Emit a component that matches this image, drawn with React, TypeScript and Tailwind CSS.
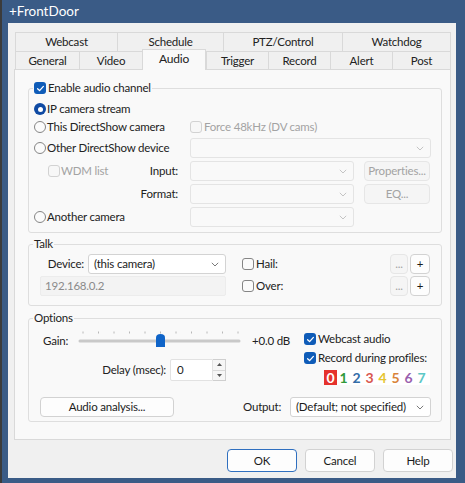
import React from "react";

const F = "font-['Lato','Liberation_Sans',sans-serif]";

function Check({ checked = false, disabled = false }: { checked?: boolean; disabled?: boolean }) {
  if (checked)
    return (
      <span className="inline-flex w-[12px] h-[12px] rounded-[3px] bg-[#0f5cb8] items-center justify-center shrink-0">
        <svg width="9" height="9" viewBox="0 0 9 9">
          <path d="M1.6 4.7 L3.6 6.6 L7.4 2.4" fill="none" stroke="white" strokeWidth="1.3" strokeLinecap="round" strokeLinejoin="round" />
        </svg>
      </span>
    );
  return (
    <span
      className={`inline-block w-[12px] h-[12px] rounded-[3px] border shrink-0 ${
        disabled ? "border-[#d2d2d2] bg-[#f7f7f7]" : "border-[#858585] bg-[#fbfbfb]"
      }`}
    />
  );
}

function Radio({ checked = false }: { checked?: boolean }) {
  if (checked)
    return (
      <span className="inline-flex w-[12px] h-[12px] rounded-full bg-[#0f4aa3] items-center justify-center shrink-0">
        <span className="w-[5px] h-[5px] rounded-full bg-white" />
      </span>
    );
  return <span className="inline-block w-[12px] h-[12px] rounded-full border border-[#858585] bg-[#fbfbfb] shrink-0" />;
}

function Chevron({ light = false }: { light?: boolean }) {
  return (
    <svg width="8" height="5" viewBox="0 0 8 5" className="shrink-0">
      <path d="M0.8 0.8 L4 4 L7.2 0.8" fill="none" stroke={light ? "#c4c4c4" : "#7a7a7a"} strokeWidth="1" />
    </svg>
  );
}

function Select({ w, value = "", disabled = false }: { w: string; value?: string; disabled?: boolean }) {
  return (
    <div
      className={`${w} h-[20px] rounded-[3px] border flex items-center justify-between pl-[5px] pr-[6px] shrink-0 ${
        disabled ? "border-[#e4e4e4] bg-[#f9f9f9]" : "border-[#d3d3d3] bg-white"
      }`}
    >
      <span className="text-[#1b1b1b] leading-none whitespace-nowrap">{value}</span>
      <Chevron light={disabled} />
    </div>
  );
}

function Btn({ w, label, disabled = false, def = false }: { w: string; label: string; disabled?: boolean; def?: boolean }) {
  return (
    <div
      className={`${w} rounded-[4px] border flex items-center justify-center shrink-0 whitespace-nowrap ${
        disabled
          ? "border-[#e6e6e6] bg-[#f5f5f5] text-[#a3a3a3]"
          : def
          ? "border-[#2f6fbf] bg-[#fdfdfd] text-[#1b1b1b]"
          : "border-[#d2d2d2] bg-[#fdfdfd] text-[#1b1b1b]"
      }`}
    >
      {label}
    </div>
  );
}

function Tab({ w, label, selected = false, last = false }: { w: string; label: string; selected?: boolean; last?: boolean }) {
  return (
    <div
      className={`${w} flex items-center justify-center border-t border-l border-[#d9d9d9] ${last ? "border-r" : ""} ${
        selected ? "relative z-10 -mt-[2px] h-[21px] bg-[#f9f9f9] border-r pb-[3px] text-[12px]" : "h-[18px] bg-[#f0f0f0]"
      }`}
    >
      {label}
    </div>
  );
}

function Slider() {
  const ticks = [83, 98.5, 114, 129.5, 145, 160.5, 176, 191.5, 207, 222.5, 238];
  return (
    <svg width="163" height="20" viewBox="0 0 163 20" className="shrink-0">
      {ticks.map((t) => (
        <line key={t} x1={t - 78} y1="0.5" x2={t - 78} y2="2.5" stroke="#b8b8b8" strokeWidth="1" />
      ))}
      <rect x="0.5" y="8.5" width="162" height="3" rx="1.5" fill="#c9c9c9" />
      <path d="M78 6.5 Q78 3 82.5 3 Q87 3 87 6.5 L87 16 L78 16 Z" fill="#0f64c8" />
    </svg>
  );
}

export default function App() {
  return (
    <div className={`${F} w-[465px] h-[483px] flex bg-[#3a5b86] text-[11.5px] tracking-[-0.2px] text-[#222] overflow-hidden`}>
      <div className="w-[2px] bg-[#3b3b3b] shrink-0" />
      <div className="flex-1 flex flex-col">
        <div className="h-[23px] flex items-center pl-[7px] text-white text-[13.5px] tracking-normal">+FrontDoor</div>
        <div className="flex">
          <div className="w-[6px] shrink-0" />
          <div className="w-[448px] h-[455px] bg-[#f0f0f0] pl-[6px] pt-[9px] flex flex-col">
            {/* tabs */}
            <div className="ml-[1px] w-[436px] flex h-[19px]">
              <div className="w-[102px] h-[19px] flex items-center justify-center border-t border-l border-[#d9d9d9]">Webcast</div>
              <div className="w-[106px] h-[19px] flex items-center justify-center border-t border-l border-[#d9d9d9]">Schedule</div>
              <div className="w-[119px] h-[19px] flex items-center justify-center border-t border-l border-[#d9d9d9]">PTZ/Control</div>
              <div className="w-[109px] h-[19px] flex items-center justify-center border-t border-l border-r border-[#d9d9d9]">Watchdog</div>
            </div>
            <div className="ml-[1px] w-[436px] flex items-start h-[18px]">
              <Tab w="w-[64px]" label="General" />
              <Tab w="w-[63px]" label="Video" />
              <Tab w="w-[64px]" label="Audio" selected />
              <Tab w="w-[62px]" label="Trigger" />
              <Tab w="w-[62px]" label="Record" />
              <Tab w="w-[62px]" label="Alert" />
              <Tab w="w-[59px]" label="Post" last />
            </div>
            {/* panel */}
            <div className="w-[437px] h-[371px] border border-[#d9d9d9] bg-[#f9f9f9] pl-[13px] flex flex-col">
              {/* Audio group */}
              <fieldset className="mt-[11px] w-[414px] border border-[#dedede] rounded-[3px] pb-[5px]">
                <legend className="ml-[4px] px-[1px] h-[14px] flex items-center gap-[1px]">
                  <Check checked />
                  <span className="ml-[1px]">Enable audio channel</span>
                </legend>
                <div className="mt-[5px] h-[18px] flex items-center pl-[5px] gap-[1px]">
                  <Radio checked />
                  <span>IP camera stream</span>
                </div>
                <div className="h-[18px] flex items-center">
                  <div className="w-[161px] pl-[5px] flex items-center gap-[1px]">
                    <Radio />
                    <span>This DirectShow camera</span>
                  </div>
                  <div className="flex items-center gap-[1px] text-[#a3a3a3]">
                    <Check disabled />
                    <span className="ml-[1px]">Force 48kHz (DV cams)</span>
                  </div>
                </div>
                <div className="mt-[2px] h-[20px] flex items-center">
                  <div className="w-[161px] pl-[5px] flex items-center gap-[1px]">
                    <Radio />
                    <span>Other DirectShow device</span>
                  </div>
                  <Select w="w-[241px]" disabled />
                </div>
                <div className="mt-[3px] h-[20px] flex items-center">
                  <div className="w-[161px] pl-[19px] pr-[12px] flex items-center">
                    <Check disabled />
                    <span className="ml-[1px] text-[#a3a3a3]">WDM list</span>
                    <span className="flex-1 text-right">Input:</span>
                  </div>
                  <Select w="w-[164px]" disabled />
                  <div className="ml-[10px] h-[20px] flex">
                    <Btn w="w-[66px]" label="Properties..." disabled />
                  </div>
                </div>
                <div className="mt-[3px] h-[20px] flex items-center">
                  <div className="w-[161px] pr-[12px] text-right">Format:</div>
                  <Select w="w-[164px]" disabled />
                  <div className="ml-[10px] h-[20px] flex">
                    <Btn w="w-[66px]" label="EQ..." disabled />
                  </div>
                </div>
                <div className="mt-[3px] h-[20px] flex items-center">
                  <div className="w-[161px] pl-[5px] flex items-center gap-[1px]">
                    <Radio />
                    <span>Another camera</span>
                  </div>
                  <Select w="w-[164px]" disabled />
                </div>
              </fieldset>

              {/* Talk group */}
              <fieldset className="mt-[3px] w-[414px] border border-[#dedede] rounded-[3px] pb-[9px]">
                <legend className="ml-[4px] px-[1px] h-[16px] leading-[16px]">Talk</legend>
                <div className="mt-[2px] h-[20px] flex items-center">
                  <div className="w-[55px] text-right">Device:</div>
                  <div className="ml-[4px] flex">
                    <Select w="w-[138px]" value="(this camera)" />
                  </div>
                  <div className="ml-[16px] w-[148px] flex items-center gap-[1px]">
                    <Check />
                    <span className="ml-[1px]">Hail:</span>
                  </div>
                  <div className="h-[20px] flex gap-[2px]">
                    <Btn w="w-[18px]" label="..." disabled />
                    <Btn w="w-[20px]" label="+" />
                  </div>
                </div>
                <div className="mt-[2px] h-[20px] flex items-center">
                  <div className="ml-[11px] w-[186px] h-[20px] bg-[#f3f3f3] border border-[#ececec] rounded-[2px] flex items-center pl-[4px] text-[#8a8a8a]">
                    192.168.0.2
                  </div>
                  <div className="ml-[16px] w-[148px] flex items-center gap-[1px]">
                    <Check />
                    <span className="ml-[1px]">Over:</span>
                  </div>
                  <div className="h-[20px] flex gap-[2px]">
                    <Btn w="w-[18px]" label="..." disabled />
                    <Btn w="w-[20px]" label="+" />
                  </div>
                </div>
              </fieldset>

              {/* Options group */}
              <fieldset className="mt-[4px] w-[414px] border border-[#dedede] rounded-[3px] pb-[4px]">
                <legend className="ml-[4px] px-[1px] h-[16px] leading-[16px]">Options</legend>
                <div className="mt-[5px] flex">
                  <div className="w-[275px] flex flex-col">
                    <div className="h-[20px] flex items-center">
                      <span className="ml-[14px] w-[35px]">Gain:</span>
                      <Slider />
                      <span className="ml-[11px]">+0.0 dB</span>
                    </div>
                    <div className="mt-[8px] h-[22px] flex items-center">
                      <div className="w-[137px] text-right">Delay (msec):</div>
                      <div className="ml-[4px] w-[43px] h-[22px] bg-white border border-[#e2e2e2] rounded-l-[2px] flex items-center pl-[6px]">0</div>
                      <div className="w-[13px] h-[22px] border border-l-0 border-[#cfcfcf] bg-[#f6f6f6] flex flex-col">
                        <div className="flex-1 flex items-center justify-center border-b border-[#d9d9d9]">
                          <svg width="5" height="3" viewBox="0 0 5 3"><path d="M0 3 L2.5 0 L5 3 Z" fill="#555" /></svg>
                        </div>
                        <div className="flex-1 flex items-center justify-center">
                          <svg width="5" height="3" viewBox="0 0 5 3"><path d="M0 0 L2.5 3 L5 0 Z" fill="#555" /></svg>
                        </div>
                      </div>
                    </div>
                  </div>
                  <div className="flex flex-col -mt-[1px]">
                    <div className="h-[18px] flex items-center gap-[1px]">
                      <Check checked />
                      <span className="ml-[1px] whitespace-nowrap">Webcast audio</span>
                    </div>
                    <div className="h-[18px] flex items-center gap-[1px] mt-[1px]">
                      <Check checked />
                      <span className="ml-[1px] whitespace-nowrap">Record during profiles:</span>
                    </div>
                    <div className="mt-[3px] ml-[20px] h-[15px] flex items-center bg-white w-[106px] font-bold text-[14px] leading-[15px] tracking-normal">
                      <span className="w-[13px] h-[15px] bg-[#e5322c] text-white text-center">0</span>
                      <span className="w-[13px] text-center text-[#2f9a3a]">1</span>
                      <span className="w-[13px] text-center text-[#356ea8]">2</span>
                      <span className="w-[13px] text-center text-[#d9574f]">3</span>
                      <span className="w-[13px] text-center text-[#e6c530]">4</span>
                      <span className="w-[13px] text-center text-[#d9843a]">5</span>
                      <span className="w-[13px] text-center text-[#9a5fae]">6</span>
                      <span className="w-[13px] text-center text-[#5cc8c6]">7</span>
                    </div>
                  </div>
                </div>
                <div className="mt-[12px] h-[20px] flex items-center">
                  <div className="ml-[11px] h-[20px] flex">
                    <Btn w="w-[134px]" label="Audio analysis..." />
                  </div>
                  <div className="ml-[69px] w-[47px]">Output:</div>
                  <Select w="w-[141px]" value="(Default; not specified)" />
                </div>
              </fieldset>
            </div>
            {/* bottom buttons */}
            <div className="mt-[9px] h-[23px] flex justify-end gap-[8px] pr-[3px]">
              <Btn w="w-[70px]" label="OK" def />
              <Btn w="w-[70px]" label="Cancel" />
              <Btn w="w-[70px]" label="Help" />
            </div>
          </div>
        </div>
      </div>
    </div>
  );
}
